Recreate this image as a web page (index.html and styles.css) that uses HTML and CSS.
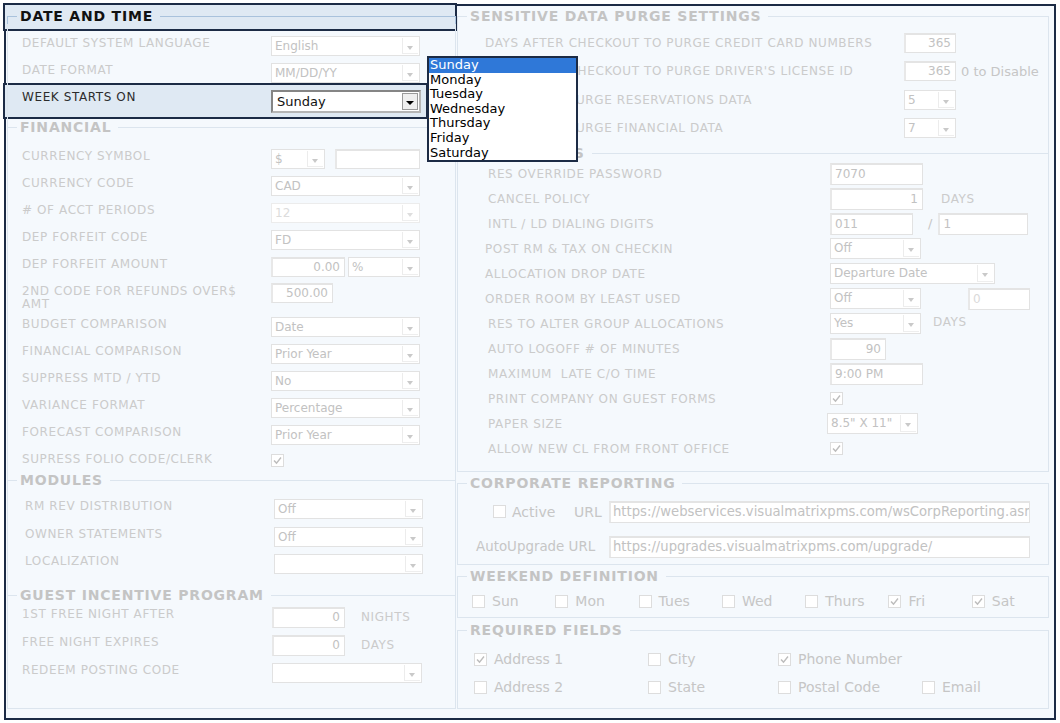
FILE: index.html
```html
<!DOCTYPE html>
<html>
<head>
<meta charset="utf-8">
<title>Settings</title>
<link rel="stylesheet" href="styles.css">
</head>
<body>
<div class="frame">
  <div class="hl hl-date"></div>
  <div class="hl hl-week"></div>

  <div class="col col-left">
    <section class="sec sec-date">
      <div class="sec-head hot"><span class="sec-title">DATE AND TIME</span></div>
      <div class="sec-body">
        <div class="lrow"><span class="lbl">DEFAULT SYSTEM LANGUAGE</span><div class="sel w149"><span class="v">English</span><i class="arr"></i></div></div>
        <div class="lrow"><span class="lbl">DATE FORMAT</span><div class="sel w149"><span class="v">MM/DD/YY</span><i class="arr"></i></div></div>
        <div class="lrow"><span class="lbl dark">WEEK STARTS ON</span><div class="sel active w150"><span class="v">Sunday</span><i class="arr"></i></div></div>
      </div>
    </section>

    <section class="sec cont sec-fin">
      <div class="sec-head"><span class="sec-title">FINANCIAL</span></div>
      <div class="sec-body">
        <div class="lrow"><span class="lbl">CURRENCY SYMBOL</span><div class="sel w54"><span class="v">$</span><i class="arr"></i></div><div class="inp w85 gap10"></div></div>
        <div class="lrow"><span class="lbl">CURRENCY CODE</span><div class="sel w149"><span class="v">CAD</span><i class="arr"></i></div></div>
        <div class="lrow"><span class="lbl">&#35; OF ACCT PERIODS</span><div class="sel w149 dim"><span class="v">12</span><i class="arr"></i></div></div>
        <div class="lrow"><span class="lbl">DEP FORFEIT CODE</span><div class="sel w149"><span class="v">FD</span><i class="arr"></i></div></div>
        <div class="lrow"><span class="lbl">DEP FORFEIT AMOUNT</span><div class="inp w74 r">0.00</div><div class="sel w72 gap3"><span class="v">%</span><i class="arr"></i></div></div>
        <div class="lrow tall"><span class="lbl wrap">2ND CODE FOR REFUNDS OVER$<br>AMT</span><div class="inp w62 r">500.00</div></div>
        <div class="lrow"><span class="lbl">BUDGET COMPARISON</span><div class="sel w149"><span class="v">Date</span><i class="arr"></i></div></div>
        <div class="lrow"><span class="lbl">FINANCIAL COMPARISON</span><div class="sel w149"><span class="v">Prior Year</span><i class="arr"></i></div></div>
        <div class="lrow"><span class="lbl">SUPPRESS MTD / YTD</span><div class="sel w149"><span class="v">No</span><i class="arr"></i></div></div>
        <div class="lrow"><span class="lbl">VARIANCE FORMAT</span><div class="sel w149"><span class="v">Percentage</span><i class="arr"></i></div></div>
        <div class="lrow"><span class="lbl">FORECAST COMPARISON</span><div class="sel w149"><span class="v">Prior Year</span><i class="arr"></i></div></div>
        <div class="lrow short"><span class="lbl">SUPRESS FOLIO CODE/CLERK</span><span class="cb on cbtop"><svg viewBox="0 0 13 13"><path d="M3 6.5l2.5 2.6 4.5-5.6"/></svg></span></div>
      </div>
    </section>

    <section class="sec cont sec-mod">
      <div class="sec-head"><span class="sec-title">MODULES</span></div>
      <div class="sec-body">
        <div class="lrow shift"><span class="lbl">RM REV DISTRIBUTION</span><div class="sel w149"><span class="v">Off</span><i class="arr"></i></div></div>
        <div class="lrow shift"><span class="lbl">OWNER STATEMENTS</span><div class="sel w149"><span class="v">Off</span><i class="arr"></i></div></div>
        <div class="lrow shift"><span class="lbl">LOCALIZATION</span><div class="sel w149"><span class="v"></span><i class="arr"></i></div></div>
      </div>
    </section>

    <section class="sec cont last sec-guest">
      <div class="sec-head"><span class="sec-title">GUEST INCENTIVE PROGRAM</span></div>
      <div class="sec-body">
        <div class="lrow g"><span class="lbl">1ST FREE NIGHT AFTER</span><div class="inp w73 r">0</div><span class="lbl unit">NIGHTS</span></div>
        <div class="lrow g"><span class="lbl">FREE NIGHT EXPIRES</span><div class="inp w73 r">0</div><span class="lbl unit">DAYS</span></div>
        <div class="lrow g"><span class="lbl">REDEEM POSTING CODE</span><div class="sel w150"><span class="v"></span><i class="arr"></i></div></div>
      </div>
    </section>
  </div>

  <div class="col col-right">
    <section class="sec sec-purge">
      <div class="sec-head"><span class="sec-title">SENSITIVE DATA PURGE SETTINGS</span></div>
      <div class="sec-body">
        <div class="srow"><span class="lbl">DAYS AFTER CHECKOUT TO PURGE CREDIT CARD NUMBERS</span><div class="inp w52 r">365</div></div>
        <div class="srow"><span class="lbl">DAYS AFTER CHECKOUT TO PURGE DRIVER'S LICENSE ID</span><div class="inp w52 r">365</div><span class="note">0 to Disable</span></div>
        <div class="srow"><span class="lbl">MONTHS TO PURGE RESERVATIONS DATA</span><div class="sel w52"><span class="v">5</span><i class="arr"></i></div></div>
        <div class="srow"><span class="lbl">MONTHS TO PURGE FINANCIAL DATA</span><div class="sel w52"><span class="v">7</span><i class="arr"></i></div></div>
      </div>
    </section>

    <section class="sec cont boxed sec-res">
      <div class="sec-head"><span class="sec-title">RES OPTIONS</span></div>
      <div class="sec-body">
        <div class="rrow"><span class="lbl">RES OVERRIDE PASSWORD</span><div class="inp w93 h22">7070</div></div>
        <div class="rrow"><span class="lbl">CANCEL POLICY</span><div class="inp w93 h22 r">1</div><span class="lbl unit u18">DAYS</span></div>
        <div class="rrow"><span class="lbl">INTL / LD DIALING DIGITS</span><div class="inp w83 h22">011</div><span class="slash">/</span><div class="inp w90 h22">1</div></div>
        <div class="rrow l3"><span class="lbl">POST RM &amp; TAX ON CHECKIN</span><div class="sel w91 h21"><span class="v">Off</span><i class="arr"></i></div></div>
        <div class="rrow l3"><span class="lbl">ALLOCATION DROP DATE</span><div class="sel w165 h21"><span class="v">Departure Date</span><i class="arr"></i></div></div>
        <div class="rrow l3"><span class="lbl">ORDER ROOM BY LEAST USED</span><div class="sel w91 h21"><span class="v">Off</span><i class="arr"></i></div><div class="inp w62 h22 gap47 dimtxt">0</div></div>
        <div class="rrow"><span class="lbl">RES TO ALTER GROUP ALLOCATIONS</span><div class="sel w91 h21"><span class="v">Yes</span><i class="arr"></i></div><span class="lbl unit u12 up">DAYS</span></div>
        <div class="rrow"><span class="lbl">AUTO LOGOFF &#35; OF MINUTES</span><div class="inp w56 h22 r">90</div></div>
        <div class="rrow"><span class="lbl">MAXIMUM&nbsp; LATE C/O TIME</span><div class="inp w93 h22">9:00 PM</div></div>
        <div class="rrow"><span class="lbl">PRINT COMPANY ON GUEST FORMS</span><span class="cb on"><svg viewBox="0 0 13 13"><path d="M3 6.5l2.5 2.6 4.5-5.6"/></svg></span></div>
        <div class="rrow"><span class="lbl">PAPER SIZE</span><div class="sel w91 h21 back3"><span class="v">8.5" X 11"</span><i class="arr"></i></div></div>
        <div class="rrow"><span class="lbl">ALLOW NEW CL FROM FRONT OFFICE</span><span class="cb on"><svg viewBox="0 0 13 13"><path d="M3 6.5l2.5 2.6 4.5-5.6"/></svg></span></div>
      </div>
    </section>

    <section class="sec boxed sp3 sec-corp">
      <div class="sec-head"><span class="sec-title">CORPORATE REPORTING</span></div>
      <div class="sec-body">
        <div class="crow c1"><span class="cb"></span><span class="ctext act">Active</span><span class="ctext url">URL</span><div class="inp wurl h22 url-in">https://webservices.visualmatrixpms.com/wsCorpReporting.asmx</div></div>
        <div class="crow c2"><span class="ctext auto">AutoUpgrade URL</span><div class="inp wurl h22 url-in">https://upgrades.visualmatrixpms.com/upgrade/</div></div>
      </div>
    </section>

    <section class="sec boxed sp3 sec-week">
      <div class="sec-head"><span class="sec-title">WEEKEND DEFINITION</span></div>
      <div class="sec-body">
        <div class="days">
          <label class="chk"><span class="cb"></span>Sun</label>
          <label class="chk"><span class="cb"></span>Mon</label>
          <label class="chk"><span class="cb"></span>Tues</label>
          <label class="chk"><span class="cb"></span>Wed</label>
          <label class="chk"><span class="cb"></span>Thurs</label>
          <label class="chk"><span class="cb on"><svg viewBox="0 0 13 13"><path d="M3 6.5l2.5 2.6 4.5-5.6"/></svg></span>Fri</label>
          <label class="chk"><span class="cb on"><svg viewBox="0 0 13 13"><path d="M3 6.5l2.5 2.6 4.5-5.6"/></svg></span>Sat</label>
        </div>
      </div>
    </section>

    <section class="sec last sp4 sec-req">
      <div class="sec-head"><span class="sec-title">REQUIRED FIELDS</span></div>
      <div class="sec-body">
        <div class="req">
          <label class="chk"><span class="cb on"><svg viewBox="0 0 13 13"><path d="M3 6.5l2.5 2.6 4.5-5.6"/></svg></span>Address 1</label>
          <label class="chk"><span class="cb"></span>City</label>
          <label class="chk"><span class="cb on"><svg viewBox="0 0 13 13"><path d="M3 6.5l2.5 2.6 4.5-5.6"/></svg></span>Phone Number</label>
          <span></span>
          <label class="chk"><span class="cb"></span>Address 2</label>
          <label class="chk"><span class="cb"></span>State</label>
          <label class="chk"><span class="cb"></span>Postal Code</label>
          <label class="chk"><span class="cb"></span>Email</label>
        </div>
      </div>
    </section>
  </div>

  <ul class="dd">
    <li class="on">Sunday</li>
    <li>Monday</li>
    <li>Tuesday</li>
    <li>Wednesday</li>
    <li>Thursday</li>
    <li>Friday</li>
    <li>Saturday</li>
  </ul>
</div>
</body>
</html>
```

FILE: styles.css
```css
* { box-sizing: border-box; }
html, body { margin: 0; padding: 0; background: #ffffff; }
body {
  font-family: "DejaVu Sans", "Liberation Sans", sans-serif;
  --line: #dce5ee;
  --lbl: #cbcbcb;
  --txt: #c2c2c2;
  --bd: #e2e2e2;
  --navy: #1c2b45;
}

.frame {
  position: relative;
  margin: 4px;
  width: 1052px;
  height: 716px;
  border: 2px solid var(--navy);
  background: #f5f9fd;
  display: flex;
  gap: 1px;
  padding: 0 5px 0 1px;
}

/* highlight annotation boxes */
.hl {
  position: absolute;
  z-index: 0;
  border: 2px solid var(--navy);
  background: #dfe9f3;
}
.hl-date { left: -3px; top: -3px; width: 454px; height: 28px; }
.hl-week { left: -3px; top: 77px; width: 425px; height: 36px; }

.col {
  position: relative;
  z-index: 1;
  display: flex;
  flex-direction: column;
  padding: 2px 0 9px;
}
.col-left { width: 449px; }
.col-right { width: 592px; }

/* sections (fieldset look) */
.sec { display: flex; flex-direction: column; }
.sec-head { display: flex; height: 16px; flex: none; }
.sec-head::before {
  content: "";
  width: 9px;
  height: 8px;
  margin-top: 8px;
  border-top: 1px solid var(--line);
  border-left: 1px solid var(--line);
}
.sec-head::after {
  content: "";
  flex: 1;
  height: 8px;
  margin-top: 8px;
  margin-left: 7px;
  border-top: 1px solid var(--line);
  border-right: 1px solid var(--line);
}
.sec.cont .sec-head::before,
.sec.cont .sec-head::after {
  height: 16px;
  margin-top: 0;
  border-top: 0;
  background: linear-gradient(var(--line), var(--line)) 0 8px / 100% 1px no-repeat;
}
.sec-head.hot::before,
.sec-head.hot::after { border-color: #a9c2dc; }

.sec-title {
  font-weight: bold;
  font-size: 14px;
  letter-spacing: 0.8px;
  line-height: 16px;
  color: #c4c4c4;
  margin-left: 3px;
  white-space: nowrap;
}
.hot .sec-title { color: #111111; }

.sec-body {
  border-left: 1px solid var(--line);
  border-right: 1px solid var(--line);
}
.sec.last { flex: 1; }
.sec.last .sec-body { flex: 1; border-bottom: 1px solid var(--line); }
.sec.boxed .sec-body { border-bottom: 1px solid var(--line); }
.sp3 { margin-top: 3px; }
.sp4 { margin-top: 4px; }

/* section spacing */
.sec-date .sec-body { padding: 8px 0 6px; }
.sec-fin .sec-body { padding: 10px 0 2px; }
.sec-mod .sec-body { padding: 7px 0 9.5px; }
.sec-guest .sec-body { padding: 0; }
.sec-purge .sec-body { padding: 5px 0 3px; }
.sec-res .sec-body { padding: 0 0 10px; }
.sec-corp .sec-body { padding: 3px 0 0; }
.sec-week .sec-body { padding: 5px 0 4px; }
.sec-req .sec-body { padding: 7px 0 0; }

/* labels */
.lbl {
  flex: none;
  font-size: 12px;
  line-height: 14px;
  letter-spacing: 0.6px;
  color: var(--lbl);
  white-space: nowrap;
}
.lbl.dark { color: #2c2c2c; }
.lbl.unit { margin-left: 16px; margin-top: 6px; }

/* left column rows */
.lrow {
  display: flex;
  align-items: flex-start;
  height: 27px;
  padding-left: 14px;
}
.lrow > .lbl { width: 249px; margin-top: 4px; }
.lrow > .lbl.unit { width: auto; margin-top: 7px; }
.lrow > .sel, .lrow > .inp { margin-top: 4px; }
.lrow.tall { height: 33px; }
.lrow.tall > .lbl { margin-top: 5px; line-height: 13px; }
.lrow.tall > .inp { margin-top: 3px; }
.lrow.short { height: 22px; }
.lrow.shift { height: 27.5px; padding-left: 17px; }
.lrow.shift > .lbl { width: 249px; }
.lrow.g { height: 28px; }
.lrow.g > .lbl:first-child { width: 250px; }
.lrow.g > .inp { height: 21px; }
.cbtop { margin-top: 6px; }

/* right column rows */
.srow {
  display: flex;
  align-items: center;
  height: 28.3px;
  padding-left: 27px;
}
.srow > .lbl { width: 419px; }
.note { font-size: 13px; color: #c6c6c6; margin-left: 5px; }

.rrow {
  display: flex;
  align-items: center;
  height: 25px;
  padding-left: 30px;
}
.rrow > .lbl { width: 342px; }
.rrow.l3 { padding-left: 27px; }
.rrow.l3 > .lbl { width: 345px; }
.rrow > .lbl.unit { width: auto; margin-top: 0; }
.u18 { margin-left: 18px !important; }
.u12 { margin-left: 12px !important; }
.up { align-self: flex-start; margin-top: 4px !important; }
.slash { font-size: 13px; color: #c6c6c6; margin: 0 6px 0 15px; }
.back3 { margin-left: -3px; }

.crow { display: flex; align-items: center; height: 35px; }
.crow.c1 { padding-left: 35px; }
.crow.c2 { padding-left: 18px; }
.ctext { font-size: 14px; color: #c6c6c6; white-space: nowrap; }
.ctext.act { margin-left: 6px; width: 62px; }
.ctext.url { width: 35px; }
.ctext.auto { font-size: 13.4px; width: 133px; }

/* checkbox groups */
.days {
  display: grid;
  grid-template-columns: repeat(7, 83.3px);
  height: 24px;
  align-items: center;
  padding-left: 14px;
}
.req {
  display: grid;
  grid-template-columns: 174px 130px 144px 120px;
  grid-auto-rows: 28px;
  align-items: center;
  padding-left: 16px;
}
.chk {
  display: flex;
  align-items: center;
  gap: 7px;
  font-size: 14px;
  color: #c6c6c6;
  white-space: nowrap;
}

/* controls */
.sel {
  display: flex;
  flex: none;
  height: 20px;
  background: #ffffff;
  border: 1px solid var(--bd);
}
.sel .v {
  flex: 1;
  font-size: 12px;
  line-height: 18px;
  color: var(--txt);
  padding-left: 3px;
  overflow: hidden;
  white-space: nowrap;
}
.sel .arr {
  position: relative;
  width: 16px;
  flex: none;
  margin: 1px 1px 1px 0;
  border-left: 1px solid #ececec;
  border-bottom: 1px solid #eeeeee;
}
.sel .arr::after {
  content: "";
  position: absolute;
  left: 4px;
  top: 8px;
  border-left: 3.5px solid transparent;
  border-right: 3.5px solid transparent;
  border-top: 4px solid #c9c9c9;
}
.sel.dim { border-color: #ececec; }
.sel.dim .v { color: #dcdcdc; }
.sel.dim .arr::after { border-top-color: #dedede; }

.sel.active {
  height: 23px;
  border: 2px solid #858585;
  border-right-color: #b5b5b5;
  border-bottom-color: #b5b5b5;
}
.sel.active .v {
  font-size: 13px;
  line-height: 19px;
  color: #111111;
  padding-left: 4px;
}
.sel.active .arr {
  width: 16px;
  margin: 1px;
  border: 1px solid #9a9a9a;
  background: #efefef;
}
.sel.active .arr::after {
  left: 3px;
  top: 7px;
  border-left-width: 4px;
  border-right-width: 4px;
  border-top: 4px solid #000000;
}

.inp {
  flex: none;
  height: 20px;
  background: #ffffff;
  border: 1px solid var(--bd);
  border-top: 2px solid #e4e4e4;
  border-left: 2px solid #e8e8e8;
  font-size: 12px;
  line-height: 17px;
  color: var(--txt);
  padding: 0 3px;
  white-space: nowrap;
  overflow: hidden;
}
.inp.r { text-align: right; padding-right: 4px; }
.inp.dimtxt { color: #dadada; }
.url-in { font-size: 13.2px; line-height: 18px; color: #c2c2c2; padding-left: 2px; }

.h21 { height: 21px; }
.h22 { height: 22px; line-height: 18px; }
.w52 { width: 52px; }
.w54 { width: 54px; }
.w56 { width: 56px; }
.w62 { width: 62px; }
.w72 { width: 72px; }
.w73 { width: 73px; }
.w74 { width: 74px; }
.w83 { width: 83px; }
.w85 { width: 85px; }
.w90 { width: 90px; }
.w91 { width: 91px; }
.w93 { width: 93px; }
.w149 { width: 149px; }
.w150 { width: 150px; }
.w165 { width: 165px; }
.wurl { width: 421px; }
.gap10 { margin-left: 10px; }
.gap3 { margin-left: 3px; }
.gap47 { margin-left: 47px; }

.cb {
  position: relative;
  flex: none;
  width: 13px;
  height: 13px;
  background: #ffffff;
  border: 1px solid #dddddd;
}
.cb svg {
  position: absolute;
  left: -1px;
  top: -1px;
  width: 13px;
  height: 13px;
  fill: none;
  stroke: #bdbdbd;
  stroke-width: 1.4;
}

/* open dropdown list */
.dd {
  position: absolute;
  z-index: 3;
  left: 421px;
  top: 50px;
  width: 151px;
  height: 106px;
  margin: 0;
  padding: 0;
  list-style: none;
  background: #ffffff;
  border: 2px solid var(--navy);
}
.dd li {
  font-size: 13px;
  line-height: 14.6px;
  color: #000000;
  padding-left: 1px;
}
.dd li.on {
  background: #2f78d8;
  color: #ffffff;
}
```
